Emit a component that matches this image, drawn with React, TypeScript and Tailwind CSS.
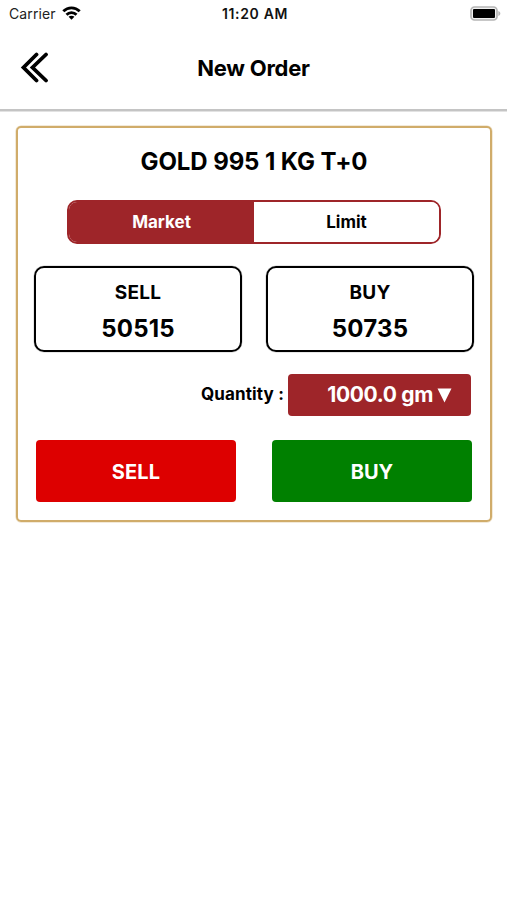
import React, { useState } from 'react';

type OrderType = 'Market' | 'Limit';

interface PriceBoxProps {
  label: string;
  price: number;
}

const StatusBar: React.FC = () => (
  <div className="flex h-[27px] items-center justify-between pl-[9px] pr-[6px]">
    <div className="flex flex-1 items-center gap-[6px] text-[14px] tracking-[0.1px] text-[#222]">
      <span>Carrier</span>
      <svg className="-mt-[2px]" width="19" height="14" viewBox="0 0 19 14" fill="none" stroke="#000" strokeWidth="2.8">
        <path d="M1.3 5.3C6 .6 13 .6 17.7 5.3" />
        <path d="M4.5 8.7C7.2 5.9 11.8 5.9 14.5 8.7" />
        <path d="M9.5 13.8L6.6 10.8C8 9.3 11 9.3 12.4 10.8Z" fill="#000" stroke="none" />
      </svg>
    </div>
    <span className="text-[14px] font-semibold tracking-[0.65px] text-[#111]">11:20 AM</span>
    <div className="flex flex-1 justify-end">
      <svg className="-mt-[1px]" width="31" height="15" viewBox="0 0 31 15">
        <rect x="1" y="1" width="26" height="13" rx="3.5" fill="#f1f1f1" stroke="#b5b5b5" strokeWidth="1.7" />
        <rect x="3" y="3" width="22" height="9" rx="1" fill="#000" />
        <path d="M28.3 5C31 6 31 9 28.3 10Z" fill="#b5b5b5" />
      </svg>
    </div>
  </div>
);

const PriceBox: React.FC<PriceBoxProps> = ({ label, price }) => (
  <div className="flex h-[86px] w-[208px] flex-col items-center rounded-[10px] border-2 border-black pt-[9px] shadow-[0_0_0_0.5px_#00000030]">
    <span className="text-[19px] font-bold leading-[31px] tracking-[0.2px]">{label}</span>
    <span className="text-[24px] font-bold leading-[41px] tracking-[0.2px]">{price}</span>
  </div>
);

const App: React.FC = () => {
  const [orderType, setOrderType] = useState<OrderType>('Market');
  const tabs: OrderType[] = ['Market', 'Limit'];

  return (
    <div className="h-[900px] w-[507px] overflow-hidden bg-white font-['Inter',sans-serif] text-black">
      <StatusBar />

      {/* Header */}
      <header className="flex h-[84px] items-center border-b-2 border-[#c4c4c4] px-[20px] shadow-[0_1px_0_#e2e2e2]">
        <button className="flex-1" aria-label="Back">
          <svg width="30" height="32" viewBox="0 0 30 32" fill="none" stroke="#000" strokeWidth="3.8" strokeLinecap="round">
            <path d="M16.5 2.5L3.5 15.5L16.5 28.5" />
            <path d="M26 2.5L12.5 15.5L26 28.5" />
          </svg>
        </button>
        <h1 className="text-[22px] font-bold tracking-[-0.25px]">New Order</h1>
        <div className="flex-1" />
      </header>

      {/* Order card */}
      <main className="ml-[16px] mr-[15px] mt-[15px] h-[396px] rounded-[5px] border-2 border-[#d0ac6a] shadow-[0_0_0_0.5px_#d0ac6a80]">
        <h2 className="mt-[16px] text-center text-[24px] font-bold leading-[36px] tracking-[-0.1px]">GOLD 995 1 KG T+0</h2>

        <div className="mx-auto mt-[20px] flex h-[44px] w-[374px] overflow-hidden rounded-[10px] border-2 border-[#9e2529]">
          {tabs.map(tab => (
            <button
              key={tab}
              onClick={() => setOrderType(tab)}
              className={`flex-1 pt-px text-[17px] font-bold ${orderType === tab ? 'bg-[#9e2529] text-white' : 'bg-white text-black'}`}
            >
              {tab}
            </button>
          ))}
        </div>

        <div className="mx-[16px] mt-[22px] flex justify-between">
          <PriceBox label="SELL" price={50515} />
          <PriceBox label="BUY" price={50735} />
        </div>

        <div className="mr-[19px] mt-[22px] flex items-center justify-end gap-[4px]">
          <span className="text-[17px] font-bold tracking-[0.15px]">Quantity :</span>
          <button className="flex h-[42px] w-[183px] items-center justify-end gap-[4px] rounded-[4px] bg-[#9e2529] pr-[19px] text-[21px] font-bold tracking-[-0.35px] text-white">
            1000.0 gm
            <svg width="15" height="15" viewBox="0 0 15 15" fill="#fff">
              <path d="M.5 .5H14.5L7.5 14.5Z" />
            </svg>
          </button>
        </div>

        <div className="mx-[18px] mt-[24px] flex justify-between text-[20px] font-bold text-white">
          <button className="h-[62px] w-[200px] rounded-[4px] bg-[#dd0000] pt-px tracking-[0.15px]">SELL</button>
          <button className="h-[62px] w-[200px] rounded-[4px] bg-[#008000] pt-px">BUY</button>
        </div>
      </main>
    </div>
  );
};

export default App;
